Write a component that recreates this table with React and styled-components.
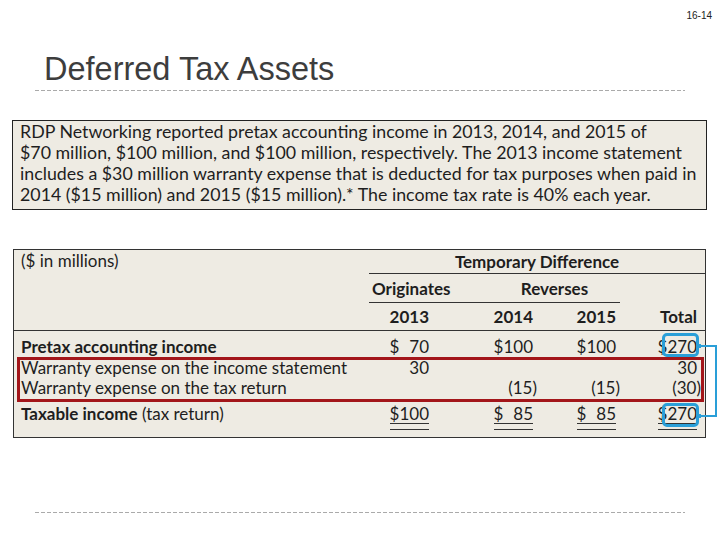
import React from 'react';
import styled, { createGlobalStyle } from 'styled-components';

const GlobalStyle = createGlobalStyle`
  html, body {
    margin: 0;
    padding: 0;
    background: #fff;
  }
  * { box-sizing: border-box; }
`;

const Slide = styled.div`
  width: 720px;
  height: 540px;
  display: flex;
  flex-direction: column;
  background: #fff;
  font-family: 'Liberation Sans', Arial, sans-serif;
`;

const PageNum = styled.div`
  align-self: flex-end;
  margin: 10px 8px 0 0;
  font-size: 10px;
  line-height: 12px;
  color: #222;
`;

const Title = styled.h1`
  margin: 29px 0 0 44px;
  font-size: 32.5px;
  line-height: 36px;
  font-weight: 400;
  color: #3d3d3d;
`;

// dashed divider, as in the slide master
const Rule = styled.div`
  height: 1px;
  margin: ${(p) => p.$top}px 35px 0;
  background: repeating-linear-gradient(to right, #aaa 0 4px, transparent 4px 6px);
`;

const ProblemBox = styled.div`
  width: 695px;
  height: 90px;
  margin: 29px 0 0 12px;
  padding: 0 7px;
  background: #eeebe3;
  border: 1px solid #222;
  font-family: Lato, 'Open Sans', sans-serif;
  font-size: 17.8px;
  line-height: 21px;
  color: #1e1e1e;
  white-space: nowrap;
`;

const TableBox = styled.div`
  position: relative;
  width: 693px;
  height: 189px;
  margin: 39px 0 0 13px;
  background: #eeebe3;
  border: 1px solid #333;
  font-family: Lato, 'Open Sans', sans-serif;
  font-size: 17px;
  color: #1e1e1e;
`;

const cols = '355px 64px 104px 83px 85px';

const Row = styled.div`
  display: grid;
  grid-template-columns: ${cols};
  height: ${(p) => p.$h || 20}px;
  align-items: center;
  margin-top: ${(p) => p.$mt || 0}px;
  border-bottom: ${(p) => (p.$line ? '1px solid #333' : 'none')};
`;

const Label = styled.div`
  padding-left: 7px;
  font-weight: ${(p) => (p.$bold ? 700 : 400)};
  white-space: nowrap;
  align-self: ${(p) => (p.$top ? 'start' : 'center')};
`;

const Span = styled.div`
  grid-column: ${(p) => p.$cols};
  align-self: stretch;
  display: flex;
  align-items: center;
  justify-content: ${(p) => p.$justify || 'center'};
  border-bottom: 1px solid #333;
  font-weight: 700;
`;

const Originates = styled.div`
  width: 120px;
  padding-left: 3px;
`;

const Reverses = styled.div`
  flex: 1;
  text-align: center;
`;

const Num = styled.div`
  text-align: right;
  padding-right: ${(p) => p.$pr || 4}px;
  font-weight: ${(p) => (p.$bold ? 700 : 400)};
  font-variant-numeric: tabular-nums;
  white-space: pre;
`;

const Neg = styled.span`
  margin-right: -4px;
`;

const DoubleLine = styled.span`
  position: relative;
  display: inline-block;
  &::after {
    content: '';
    position: absolute;
    left: 0;
    right: 0;
    bottom: -6px;
    height: 5px;
    border-top: 1px solid #333;
    border-bottom: 1px solid #333;
  }
`;

const Body = styled.div`
  padding-top: 5px;
`;

// annotation marks drawn over the table
const RedFrame = styled.div`
  position: absolute;
  left: 3px;
  top: 107px;
  width: 687px;
  height: 45px;
  border: 3px solid #a3161a;
  pointer-events: none;
`;

const BlueBox = styled.div`
  position: absolute;
  left: 648px;
  top: ${(p) => p.$top}px;
  width: 37px;
  height: 24px;
  border: 3px solid #2a9fd8;
  border-radius: 5px;
  pointer-events: none;
`;

const Connector = styled.svg`
  position: absolute;
  left: 683px;
  top: 90px;
  overflow: visible;
`;

const pr = [4, 4, 4, 8];

function Values({ values, bold, underline }) {
  return values.map((v, i) => {
    let content = v;
    if (typeof v === 'string' && v.startsWith('(')) {
      content = (
        <>
          {v.slice(0, -1)}
          <Neg>)</Neg>
        </>
      );
    }
    return (
      <Num key={i} $pr={pr[i]} $bold={bold}>
        {underline ? <DoubleLine>{content}</DoubleLine> : content}
      </Num>
    );
  });
}

const rows = [
  { label: 'Pretax accounting income', bold: true, values: ['$\u200770', '$100', '$100', '$270'] },
  { label: 'Warranty expense on the income statement', values: ['30', '', '', '30'] },
  { label: 'Warranty expense on the tax return', values: ['', '(15)', '(15)', '(30)'] },
];

export default function App() {
  return (
    <>
      <GlobalStyle />
      <Slide>
        <PageNum>16-14</PageNum>
        <Title>Deferred Tax Assets</Title>
        <Rule $top={3} />

        <ProblemBox>
          RDP Networking reported pretax accounting income in 2013, 2014, and 2015 of
          <br />
          $70 million, $100 million, and $100 million, respectively. The 2013 income statement
          <br />
          includes a $30 million warranty expense that is deducted for tax purposes when paid in
          <br />
          2014 ($15 million) and 2015 ($15 million).* The income tax rate is 40% each year.
        </ProblemBox>

        <TableBox>
          <Row $h={24}>
            <Label $top>($ in millions)</Label>
            <Span $cols="2 / -1">Temporary Difference</Span>
          </Row>
          <Row $h={29}>
            <div />
            <Span $cols="2 / 5" $justify="flex-start">
              <Originates>Originates</Originates>
              <Reverses>Reverses</Reverses>
            </Span>
          </Row>
          <Row $h={28} $line>
            <div />
            <Values values={['2013', '2014', '2015', 'Total']} bold />
          </Row>

          <Body>
            {rows.map((r) => (
              <Row key={r.label} $h={r.bold ? 21 : 20}>
                <Label $bold={r.bold}>{r.label}</Label>
                <Values values={r.values} />
              </Row>
            ))}
            <Row $mt={6}>
              <Label>
                <b>Taxable income</b> (tax return)
              </Label>
              <Values values={['$100', '$\u200785', '$\u200785', '$270']} underline />
            </Row>
          </Body>

          <RedFrame />
          <BlueBox $top={83} />
          <BlueBox $top={153} />
          <Connector width="20" height="80" viewBox="0 0 20 80">
            <path d="M2 6 H19 V76 H2" fill="none" stroke="#2a9fd8" strokeWidth="2" />
            <rect x="0" y="4" width="4" height="4" fill="#2a9fd8" />
            <rect x="0" y="74" width="4" height="4" fill="#2a9fd8" />
          </Connector>
        </TableBox>

        <Rule $top={74} />
      </Slide>
    </>
  );
}
